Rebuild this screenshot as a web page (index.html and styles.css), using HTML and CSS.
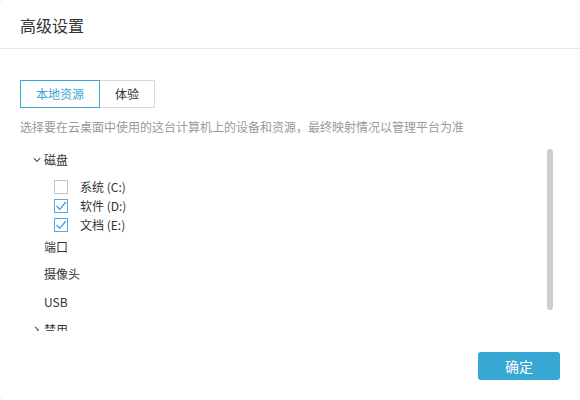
FILE: index.html
```html
<!DOCTYPE html>
<html lang="zh-CN">
<head>
<meta charset="utf-8">
<link rel="stylesheet" href="styles.css">
</head>
<body>
<div class="dialog">
  <div class="header">高级设置</div>
  <div class="content">
    <div class="tabs">
      <div class="tab active">本地资源</div>
      <div class="tab">体验</div>
    </div>
    <div class="desc">选择要在云桌面中使用的这台计算机上的设备和资源，最终映射情况以管理平台为准</div>
    <div class="tree-wrap">
      <div class="tree">
        <div class="node">
          <svg class="arrow" width="8" height="6" viewBox="0 0 8 6"><path d="M0.8 1.2 L4 4.4 L7.2 1.2" fill="none" stroke="#555" stroke-width="1.1"/></svg>
          <span>磁盘</span>
        </div>
        <div class="children">
          <div class="leaf">
            <svg class="cb" width="14" height="14" viewBox="0 0 14 14"><rect x="0.5" y="0.5" width="13" height="13" fill="#fff" stroke="#c4c4c4"/></svg>
            <span>系统 (C:)</span>
          </div>
          <div class="leaf">
            <svg class="cb" width="14" height="14" viewBox="0 0 14 14"><rect x="0.5" y="0.5" width="13" height="13" fill="#fff" stroke="#5aa7e6"/><path d="M2.5 7 L5.8 10.3 L11.8 3" fill="none" stroke="#3d97e0" stroke-width="1.2"/></svg>
            <span>软件 (D:)</span>
          </div>
          <div class="leaf">
            <svg class="cb" width="14" height="14" viewBox="0 0 14 14"><rect x="0.5" y="0.5" width="13" height="13" fill="#fff" stroke="#5aa7e6"/><path d="M2.5 7 L5.8 10.3 L11.8 3" fill="none" stroke="#3d97e0" stroke-width="1.2"/></svg>
            <span>文档 (E:)</span>
          </div>
        </div>
        <div class="node first-after"><span class="noarrow"></span><span>端口</span></div>
        <div class="node"><span class="noarrow"></span><span>摄像头</span></div>
        <div class="node"><span class="noarrow"></span><span>USB</span></div>
        <div class="node">
          <svg class="arrow" width="8" height="8" viewBox="0 0 8 8"><path d="M2 0.8 L5.4 4 L2 7.2" fill="none" stroke="#555" stroke-width="1.1"/></svg>
          <span>禁用</span>
        </div>
      </div>
      <div class="scrollbar"><div class="thumb"></div></div>
    </div>
  </div>
  <div class="footer">
    <button class="ok">确定</button>
  </div>
</div>
</body>
</html>
```
FILE: styles.css
```css
* { box-sizing: border-box; }
html, body {
  margin: 0;
  padding: 0;
  background: #f2f2f2;
}
body {
  width: 580px;
  height: 400px;
  font-family: "Noto Sans CJK SC", "Noto Sans", sans-serif;
  color: #333;
}
.dialog {
  width: 580px;
  height: 400px;
  background: #fff;
  border-radius: 4px;
  overflow: hidden;
  display: flex;
  flex-direction: column;
}
.header {
  height: 49px;
  border-bottom: 1px solid #e8e8e8;
  padding-left: 20px;
  font-size: 16px;
  line-height: 50px;
  color: #333;
}
.content {
  padding: 31px 27px 0 20px;
}
.tabs {
  display: flex;
}
.tab {
  height: 28px;
  padding: 0 15px;
  border: 1px solid #d9d9d9;
  font-size: 12px;
  line-height: 26px;
  color: #333;
  margin-left: -1px;
  position: relative;
}
.tab:first-child { margin-left: 0; }
.tab.active {
  border-color: #3aa6d3;
  color: #3aa6d3;
  z-index: 1;
}
.desc {
  margin-top: 10px;
  font-size: 12px;
  line-height: 18px;
  color: #999;
  white-space: nowrap;
}
.tree-wrap {
  margin-top: 10px;
  display: flex;
  height: 185px;
}
.tree {
  flex: 1;
  overflow: hidden;
  font-size: 12px;
}
.node {
  height: 28px;
  display: flex;
  align-items: center;
  line-height: 28px;
}
.node .arrow, .node .noarrow {
  width: 8px;
  margin-left: 13px;
  margin-right: 3px;
  flex: none;
}
.children {
  padding-top: 3px;
  padding-left: 34px;
}
.leaf {
  height: 19px;
  display: flex;
  align-items: center;
}
.leaf .cb {
  flex: none;
  margin-right: 12px;
}
.first-after {
  height: 26px;
}
.scrollbar {
  width: 6px;
  flex: none;
  padding-top: 3px;
}
.thumb {
  width: 6px;
  height: 161px;
  background: #cdcdcd;
  border-radius: 3px;
}
.footer {
  display: flex;
  justify-content: flex-end;
  padding: 21px 20px 0 0;
}
.ok {
  width: 82px;
  height: 28px;
  border: none;
  border-radius: 3px;
  background: #37a8d4;
  color: #fff;
  font-family: "Noto Sans CJK SC", sans-serif;
  font-size: 14px;
  padding: 0;
  line-height: 28px;
}
```
